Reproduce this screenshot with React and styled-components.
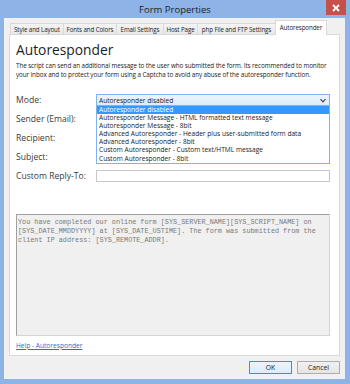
import styled, { createGlobalStyle } from "styled-components";

const GlobalStyle = createGlobalStyle`
    html, body {
        margin: 0;
        padding: 0;
        width: 350px;
        height: 384px;
        overflow: hidden;
    }
    * {
        box-sizing: border-box;
    }
`

const tabs = [
    { label: "Style and Layout", w: 54 },
    { label: "Fonts and Colors", w: 54 },
    { label: "Email Settings", w: 48 },
    { label: "Host Page", w: 35 },
    { label: "php File and FTP Settings", w: 79 },
    { label: "Autoresponder", w: 52, active: true },
];

const modes = [
    "Autoresponder disabled",
    "Autoresponder Message - HTML formatted text message",
    "Autoresponder Message - 8bit",
    "Advanced Autoresponder - Header plus user-submitted form data",
    "Advanced Autoresponder - 8bit",
    "Custom Autoresponder - Custom text/HTML message",
    "Custom Autoresponder - 8bit",
];

const bodyText = "You have completed our online form [SYS_SERVER_NAME][SYS_SCRIPT_NAME] on [SYS_DATE_MMDDYYYY] at [SYS_DATE_USTIME]. The form was submitted from the client IP address: [SYS_REMOTE_ADDR].";

export default function App() {
    return (
        <Window>
            <GlobalStyle />
            <TitleBar>
                <Title>Form Properties</Title>
                <CloseButton>
                    <svg width="8" height="8" viewBox="0 0 8 8">
                        <path d="M1 1L7 7M7 1L1 7" stroke="#fff" strokeWidth="1.8" />
                    </svg>
                </CloseButton>
            </TitleBar>

            <Client>
                <TabRow>
                    {tabs.map((t) => (
                        <Tab key={t.label} $w={t.w} $active={t.active}>{t.label}</Tab>
                    ))}
                </TabRow>

                <Panel>
                    <Heading>Autoresponder</Heading>
                    <Description>
                        The script can send an additional message to the user who submitted the form. Its recommended to monitor<br />
                        your inbox and to protect your form using a Captcha to avoid any abuse of the autoresponder function.
                    </Description>

                    <FormGrid>
                        <Label>Mode:</Label>
                        <ComboWrap>
                            <Combo>
                                <span>Autoresponder disabled</span>
                                <svg width="6" height="5" viewBox="0 0 6 5">
                                    <path d="M0.5 1.2L3 3.8L5.5 1.2" stroke="#444" strokeWidth="1.2" fill="none" />
                                </svg>
                            </Combo>
                            <DropList>
                                {modes.map((m, i) => (
                                    <DropItem key={m} $selected={i === 0}>{m}</DropItem>
                                ))}
                            </DropList>
                        </ComboWrap>

                        <Label>Sender (Email):</Label>
                        <Input />
                        <Label>Recipient:</Label>
                        <Input />
                        <Label>Subject:</Label>
                        <Input />
                        <Label>Custom Reply-To:</Label>
                        <Input />
                    </FormGrid>

                    <MessageBox readOnly value={bodyText} />

                    <HelpLink href="#">Help - Autoresponder</HelpLink>
                </Panel>

                <ButtonRow>
                    <Button $default>OK</Button>
                    <Button>Cancel</Button>
                </ButtonRow>
            </Client>
        </Window>
    );
}

const Window = styled.div`
    width: 350px;
    height: 384px;
    background: #8db3e7;
    display: flex;
    flex-direction: column;
    font-family: "Open Sans", "Noto Sans", sans-serif;
`

const TitleBar = styled.div`
    height: 18px;
    display: flex;
    align-items: flex-start;
    justify-content: center;
    position: relative;
`

const Title = styled.div`
    font-size: 9.5px;
    line-height: 19px;
    color: #222;
`

const CloseButton = styled.div`
    position: absolute;
    top: 0;
    right: 4px;
    width: 20px;
    height: 15px;
    background: #c7504b;
    display: flex;
    align-items: center;
    justify-content: center;
`

const Client = styled.div`
    flex: 1;
    margin: 0 5px 5px 4px;
    background: #f0f0f0;
    display: flex;
    flex-direction: column;
    padding: 3px 5px 5px 5px;
`

const TabRow = styled.div`
    display: flex;
    align-items: flex-end;
    height: 14px;
    padding-left: 1px;
    position: relative;
    z-index: 1;
    margin-bottom: -1px;
`

const Tab = styled.div`
    width: ${(p) => p.$w}px;
    height: ${(p) => (p.$active ? 15 : 12)}px;
    margin-right: -1px;
    border: 1px solid #d9d9d9;
    border-bottom: ${(p) => (p.$active ? "none" : "1px solid #d9d9d9")};
    background: ${(p) => (p.$active ? "#fff" : "linear-gradient(#f4f4f4, #e8e8e8)")};
    font-size: 6.2px;
    color: #222;
    display: flex;
    align-items: center;
    justify-content: center;
    white-space: nowrap;
    letter-spacing: -0.1px;
    padding-bottom: ${(p) => (p.$active ? 2 : 0)}px;
`

const Panel = styled.div`
    flex: 1;
    background: #fff;
    border: 1px solid #d9d9d9;
    padding: 5px 9px 0 6px;
    display: flex;
    flex-direction: column;
`

const Heading = styled.h1`
    margin: 0;
    font-size: 13.8px;
    font-weight: 400;
    line-height: 19px;
    color: #1e1e1e;
`

const Description = styled.p`
    margin: 3px 0 0;
    font-size: 6.3px;
    line-height: 8.5px;
    color: #222;
    letter-spacing: -0.08px;
    white-space: nowrap;
`

const FormGrid = styled.div`
    display: grid;
    grid-template-columns: 80px 1fr;
    grid-auto-rows: 12px;
    row-gap: 7px;
    align-items: center;
    margin-top: 15px;
`

const Label = styled.div`
    font-size: 8.6px;
    color: #3a3a3a;
    white-space: nowrap;
`

const ComboWrap = styled.div`
    position: relative;
    height: 12px;
`

const Combo = styled.div`
    height: 12px;
    border: 1px solid #7eb4ea;
    background: linear-gradient(#ecf4fc, #dcecfc);
    display: flex;
    align-items: center;
    justify-content: space-between;
    padding: 0 3px 0 2px;
    font-size: 6.6px;
    color: #222;
`

const DropList = styled.div`
    position: absolute;
    top: 12px;
    left: 0;
    right: 0;
    background: #fff;
    border: 1px solid #7eb4ea;
    border-top: none;
    z-index: 2;
`

const DropItem = styled.div`
    height: 8.1px;
    line-height: 8.1px;
    font-size: 6.6px;
    padding-left: 2px;
    white-space: nowrap;
    background: ${(p) => (p.$selected ? "#3399ff" : "transparent")};
    color: ${(p) => (p.$selected ? "#fff" : "#222")};
`

const Input = styled.div`
    height: 12px;
    border: 1px solid #c9c9c9;
    background: #fff;
`

const MessageBox = styled.textarea`
    margin-top: 32px;
    height: 122px;
    resize: none;
    overflow: hidden;
    background: #f0f0f0;
    border: 1px solid #d4d4d4;
    border-top-color: #a0a0a0;
    border-left-color: #a0a0a0;
    padding: 3px 1px;
    font-family: "Liberation Mono", monospace;
    font-size: 6.8px;
    line-height: 9px;
    color: #7a7a7a;
    outline: none;
`

const HelpLink = styled.a`
    margin-top: 5px;
    font-size: 6.6px;
    color: #2a6fc9;
    text-decoration: underline;
    align-self: flex-start;
`

const ButtonRow = styled.div`
    display: flex;
    justify-content: flex-end;
    gap: 5px;
    padding: 5px 0 0;
`

const Button = styled.button`
    width: 43px;
    height: 13px;
    padding: 0;
    border: 1px solid ${(p) => (p.$default ? "#3c8fd8" : "#adadad")};
    background: ${(p) => (p.$default ? "linear-gradient(#ecf4fc, #dcecfc)" : "linear-gradient(#f0f0f0, #e5e5e5)")};
    font-family: "Open Sans", "Noto Sans", sans-serif;
    font-size: 6.8px;
    color: #222;
`
